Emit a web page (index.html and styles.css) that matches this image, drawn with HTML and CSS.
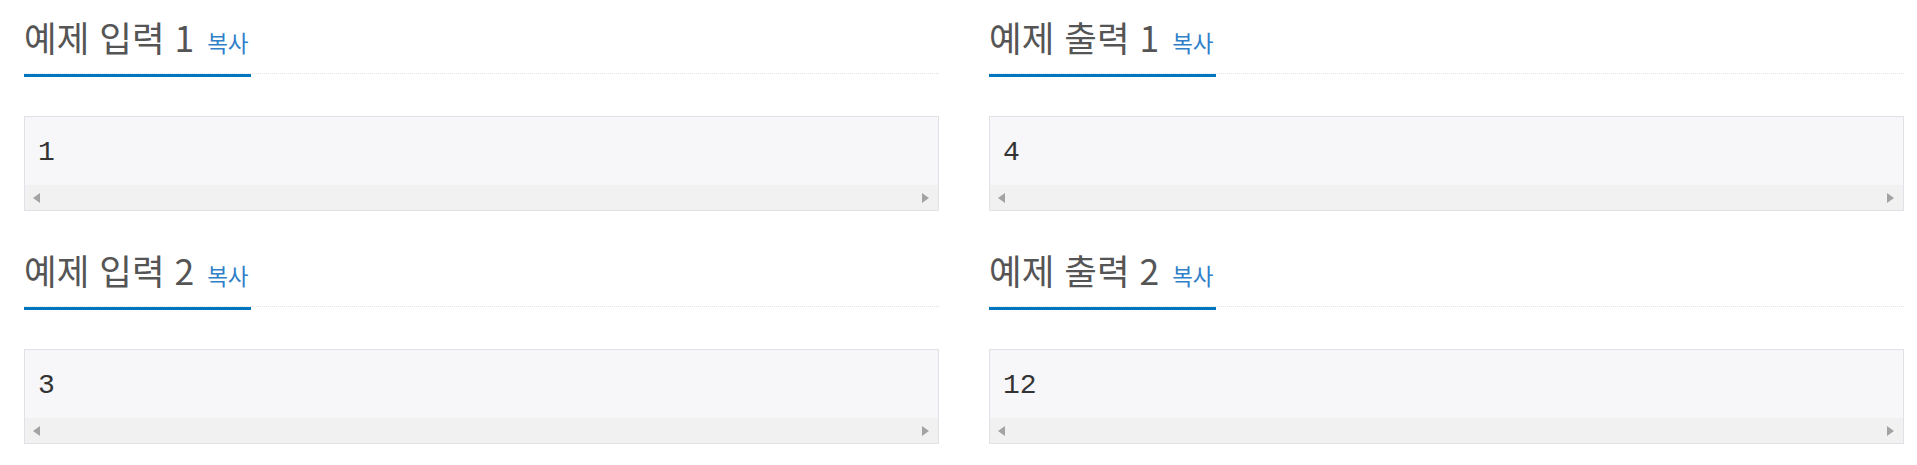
FILE: index.html
```html
<!DOCTYPE html>
<html lang="ko">
<head>
<meta charset="utf-8">
<title>예제</title>
<link rel="stylesheet" href="styles.css">
</head>
<body>
<div class="samples">
  <section class="sample">
    <div class="headline"><h2>예제 입력 1 <span class="copy">복사</span></h2></div>
    <div class="sampledata">
      <pre class="data">1</pre>
      <div class="hscroll"><span class="arrow left"></span><span class="arrow right"></span></div>
    </div>
  </section>
  <section class="sample">
    <div class="headline"><h2>예제 출력 1 <span class="copy">복사</span></h2></div>
    <div class="sampledata">
      <pre class="data">4</pre>
      <div class="hscroll"><span class="arrow left"></span><span class="arrow right"></span></div>
    </div>
  </section>
  <section class="sample">
    <div class="headline"><h2>예제 입력 2 <span class="copy">복사</span></h2></div>
    <div class="sampledata">
      <pre class="data">3</pre>
      <div class="hscroll"><span class="arrow left"></span><span class="arrow right"></span></div>
    </div>
  </section>
  <section class="sample">
    <div class="headline"><h2>예제 출력 2 <span class="copy">복사</span></h2></div>
    <div class="sampledata">
      <pre class="data">12</pre>
      <div class="hscroll"><span class="arrow left"></span><span class="arrow right"></span></div>
    </div>
  </section>
</div>
</body>
</html>
```

FILE: styles.css
```css
html, body {
  margin: 0;
  padding: 0;
  background: #fff;
}

.samples {
  display: grid;
  grid-template-columns: 915px 915px;
  column-gap: 50px;
  row-gap: 22px;
  padding-left: 24px;
}

.sample {
  padding-top: 17px;
}

.headline {
  border-bottom: 1px dotted #e2e2e2;
}

.headline h2 {
  display: inline-block;
  margin: 0 0 -4px 0;
  padding: 0 2px 17px 0;
  font-family: "Noto Sans CJK KR", "Noto Sans", sans-serif;
  font-weight: 400;
  font-size: 35.5px;
  line-height: 40px;
  color: #555;
  border-bottom: 3px solid #0076c0;
  white-space: nowrap;
}

.copy {
  font-size: 22.5px;
  line-height: 20px;
  color: #2f80c8;
  margin-left: 3px;
}

.sampledata {
  margin-top: 42px;
  background: #f7f7f9;
  border: 1px solid #e1e1e8;
  display: flex;
  flex-direction: column;
}

.data {
  margin: 0;
  padding: 16px 13px 12px;
  font-family: "Liberation Mono", monospace;
  font-size: 28px;
  line-height: 40px;
  color: #333;
}

.hscroll {
  height: 25px;
  background: #f1f1f1;
  display: flex;
  align-items: center;
  justify-content: space-between;
  padding: 0 9px 0 8px;
}

.arrow {
  width: 0;
  height: 0;
  border-top: 5px solid transparent;
  border-bottom: 5px solid transparent;
}

.arrow.left {
  border-right: 7px solid #a3a3a3;
}

.arrow.right {
  border-left: 7px solid #a3a3a3;
}
```
